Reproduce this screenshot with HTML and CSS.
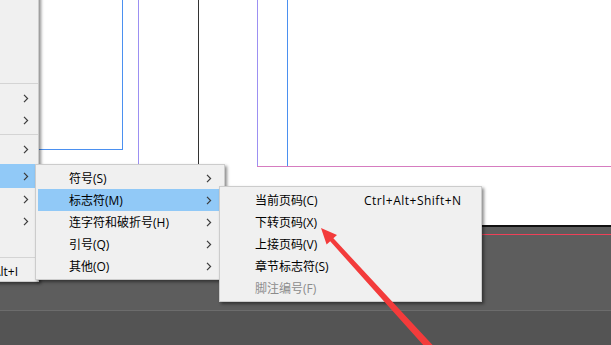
FILE: index.html
```html
<!DOCTYPE html>
<html lang="zh-CN">
<head>
    <meta charset="UTF-8">
    <meta name="viewport" content="width=device-width, initial-scale=1.0">
    <title>插入特殊字符 - 标志符</title>
    <link rel="stylesheet" href="styles.css">
</head>
<body>

    <div class="workspace">
        <div class="page">
            <!-- guides on the document page -->
            <div class="frame-box"></div>
            <div class="guide guide-col-a"></div>
            <div class="guide guide-black"></div>
            <div class="guide guide-col-b"></div>
            <div class="guide guide-col-c"></div>
            <div class="guide guide-margin"></div>
        </div>
        <div class="page-edge"></div>
        <div class="pasteboard">
            <div class="bleed-line"></div>
        </div>
        <div class="bottom-bar"></div>
    </div>

    <!-- context menu, first level (mostly off screen) -->
    <div class="menu menu-main">
        <div class="spacer-top"></div>
        <div class="sep"></div>
        <div class="item"><span class="arrow"><svg width="6" height="9" viewBox="0 0 6 9"><path d="M1 0.8 L4.6 4.5 L1 8.2"/></svg></span></div>
        <div class="item"><span class="arrow"><svg width="6" height="9" viewBox="0 0 6 9"><path d="M1 0.8 L4.6 4.5 L1 8.2"/></svg></span></div>
        <div class="sep"></div>
        <div class="item"><span class="arrow"><svg width="6" height="9" viewBox="0 0 6 9"><path d="M1 0.8 L4.6 4.5 L1 8.2"/></svg></span></div>
        <div class="spacer-small"></div>
        <div class="item item-tall active"><span class="arrow"><svg width="6" height="9" viewBox="0 0 6 9"><path d="M1 0.8 L4.6 4.5 L1 8.2"/></svg></span></div>
        <div class="item"><span class="arrow"><svg width="6" height="9" viewBox="0 0 6 9"><path d="M1 0.8 L4.6 4.5 L1 8.2"/></svg></span></div>
        <div class="item"><span class="arrow"><svg width="6" height="9" viewBox="0 0 6 9"><path d="M1 0.8 L4.6 4.5 L1 8.2"/></svg></span></div>
        <div class="item"></div>
        <div class="sep"></div>
        <div class="item item-short"><span class="key">Alt+I</span></div>
    </div>

    <!-- second level -->
    <div class="menu menu-sub">
        <div class="item"><span class="label">符号(S)</span><span class="arrow"><svg width="6" height="9" viewBox="0 0 6 9"><path d="M1 0.8 L4.6 4.5 L1 8.2"/></svg></span></div>
        <div class="item active"><span class="label">标志符(M)</span><span class="arrow"><svg width="6" height="9" viewBox="0 0 6 9"><path d="M1 0.8 L4.6 4.5 L1 8.2"/></svg></span></div>
        <div class="item"><span class="label">连字符和破折号(H)</span><span class="arrow"><svg width="6" height="9" viewBox="0 0 6 9"><path d="M1 0.8 L4.6 4.5 L1 8.2"/></svg></span></div>
        <div class="item"><span class="label">引号(Q)</span><span class="arrow"><svg width="6" height="9" viewBox="0 0 6 9"><path d="M1 0.8 L4.6 4.5 L1 8.2"/></svg></span></div>
        <div class="item"><span class="label">其他(O)</span><span class="arrow"><svg width="6" height="9" viewBox="0 0 6 9"><path d="M1 0.8 L4.6 4.5 L1 8.2"/></svg></span></div>
    </div>

    <!-- third level -->
    <div class="menu menu-marker">
        <div class="item"><span class="label">当前页码(C)</span><span class="shortcut">Ctrl+Alt+Shift+N</span></div>
        <div class="item"><span class="label">下转页码(X)</span></div>
        <div class="item"><span class="label">上接页码(V)</span></div>
        <div class="item"><span class="label">章节标志符(S)</span></div>
        <div class="item disabled"><span class="label">脚注编号(F)</span></div>
    </div>

    <!-- annotation arrow -->
    <svg class="annotation" width="611" height="345" viewBox="0 0 611 345">
        <polygon points="321,228 337,235.1 333.4,238.3 435,347.6 429.8,352.4 330.2,241.3 326.6,244.5"/>
    </svg>

</body>
</html>
```

FILE: styles.css
```css
body {
    margin: 0;
    width: 611px;
    height: 345px;
    overflow: hidden;
    position: relative;
    font-family: "Open Sans", "Noto Sans CJK SC", sans-serif;
    font-size: 12px;
    color: #000;
}

.workspace {
    display: flex;
    flex-direction: column;
    height: 345px;
}
.page {
    height: 225px;
    background: #fff;
    position: relative;
    overflow: hidden;
}
.page-edge {
    height: 2px;
    background: #111;
}
.pasteboard {
    height: 83px;
    background: #5d5d5d;
    padding-top: 7px;
    box-sizing: border-box;
}
.bleed-line {
    height: 1px;
    background: #ee4058;
}
.bottom-bar {
    flex: 1;
    background: #545454;
    border-top: 1px solid #6c6c6c;
}

/* page guides */
.frame-box {
    position: absolute;
    left: 20px;
    top: -10px;
    width: 101px;
    height: 158px;
    border: 1px solid #4b90f0;
}
.guide {
    position: absolute;
    top: 0;
    width: 1px;
}
.guide-col-a {
    left: 138px;
    height: 225px;
    background: #9c90f2;
}
.guide-black {
    left: 198px;
    height: 225px;
    background: #333;
}
.guide-col-b {
    left: 257px;
    height: 166px;
    background: #9c90f2;
}
.guide-col-c {
    left: 287px;
    height: 166px;
    background: #4b90f0;
}
.guide-margin {
    left: 257px;
    top: 166px;
    width: 354px;
    height: 1px;
    background: #d67cc0;
}

/* menus */
.menu {
    position: absolute;
    background: #f0f0f0;
    border: 1px solid #cccccc;
    box-shadow: 2px 2px 3px rgba(0, 0, 0, 0.45);
    display: flex;
    flex-direction: column;
    box-sizing: border-box;
}
.item {
    height: 22px;
    display: flex;
    align-items: center;
    white-space: nowrap;
}
.item.active {
    background: #91c9f7;
}
.arrow {
    display: flex;
    margin-left: auto;
}
.arrow path {
    fill: none;
    stroke: #3c3c3c;
    stroke-width: 1.2;
}
.sep {
    height: 1px;
    background: #d4d4d4;
    margin: 3px 0;
}

.menu-main {
    left: -200px;
    top: -10px;
    width: 239px;
    border-top: none;
}
.menu-main .spacer-top {
    height: 90px;
}
.menu-main .spacer-small {
    height: 4px;
}
.menu-main .item {
    padding-right: 9px;
}
.menu-main .item-tall {
    height: 24px;
}
.menu-main .item-short {
    height: 20px;
    padding-right: 20px;
}
.menu-main .key {
    margin-left: auto;
}

.menu-sub {
    left: 35px;
    top: 164px;
    width: 190px;
    padding: 2px;
}
.menu-sub .label {
    padding-left: 31px;
}
.menu-sub .arrow {
    margin-right: 10px;
}

.menu-marker {
    left: 219px;
    top: 186px;
    width: 263px;
    padding: 2px;
}
.menu-marker .label {
    padding-left: 33px;
    width: 109px;
}
.menu-marker .shortcut {
    letter-spacing: 0.5px;
}
.menu-marker .disabled {
    color: #8c8c8c;
}

.annotation {
    position: absolute;
    left: 0;
    top: 0;
}
.annotation polygon {
    fill: #f33b3b;
}
```
